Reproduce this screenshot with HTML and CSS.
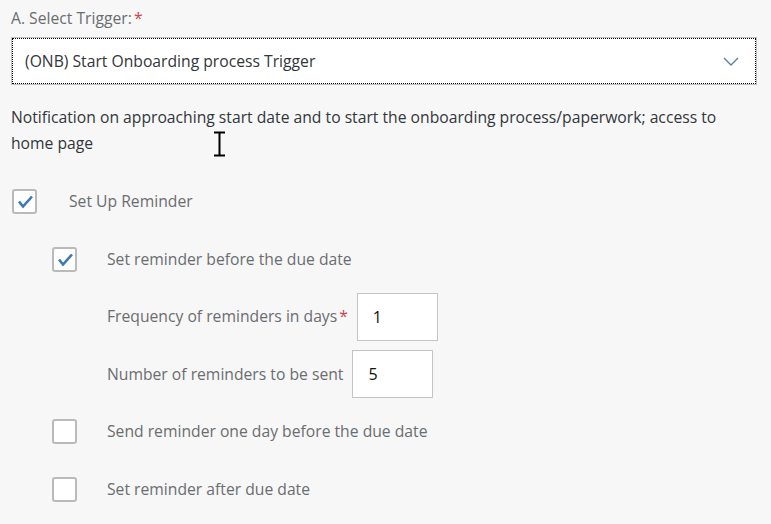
FILE: index.html
```html
<!DOCTYPE html>
<html lang="en">
<head>
  <meta charset="UTF-8" />
  <title>Onboarding Trigger</title>
  <link rel="stylesheet" href="styles.css">
</head>
<body>
  <div class="panel">
    <div class="field-label">A. Select Trigger:<span class="req">*</span></div>

    <div class="select-box">
      <span class="select-text">(ONB) Start Onboarding process Trigger</span>
      <svg class="chevron" width="16" height="9" viewBox="0 0 16 9">
        <path d="M1 1 L8 8 L15 1" fill="none" stroke="#5b80a8" stroke-width="1.4" />
      </svg>
    </div>

    <p class="description">Notification on approaching start date and to start the onboarding process/paperwork; access to home page</p>

    <div class="row">
      <span class="checkbox">
        <svg class="tick" width="21" height="21" viewBox="0 0 21 21">
          <path d="M5 10.5 L9 15.5 L18 5.5" fill="none" stroke="#3b78b5" stroke-width="2.6" />
        </svg>
      </span>
      <span class="row-label">Set Up Reminder</span>
    </div>

    <div class="row nested">
      <span class="checkbox">
        <svg class="tick" width="21" height="21" viewBox="0 0 21 21">
          <path d="M5 10.5 L9 15.5 L18 5.5" fill="none" stroke="#3b78b5" stroke-width="2.6" />
        </svg>
      </span>
      <span class="row-label">Set reminder before the due date</span>
    </div>

    <div class="row sub">
      <span class="row-label">Frequency of reminders in days<span class="req">*</span></span>
      <input class="num-input" type="text" value="1" />
    </div>

    <div class="row sub">
      <span class="row-label">Number of reminders to be sent</span>
      <input class="num-input" type="text" value="5" />
    </div>

    <div class="row nested">
      <span class="checkbox"></span>
      <span class="row-label">Send reminder one day before the due date</span>
    </div>

    <div class="row nested">
      <span class="checkbox"></span>
      <span class="row-label">Set reminder after due date</span>
    </div>
  </div>

  <!-- text cursor caught in the screenshot -->
  <svg class="ibeam" width="13" height="26" viewBox="0 0 13 26">
    <path d="M1 1.5 H12 M6.5 1.5 V24.5 M1 24.5 H12" fill="none" stroke="#000" stroke-width="2" />
  </svg>
</body>
</html>
```

FILE: styles.css
```css
body {
  margin: 0;
  padding: 0;
  background: #f7f7f7;
  font-family: 'Open Sans', 'Noto Sans', sans-serif;
  font-size: 15.7px;
  color: #32363a;
}

.panel {
  padding: 6px 14px 0 11px;
}

.field-label {
  color: #6a6d70;
  line-height: 24px;
  margin-bottom: 7px;
}

.req {
  color: #d0424a;
  margin-left: 2px;
}

.select-box {
  display: flex;
  align-items: center;
  justify-content: space-between;
  height: 48px;
  box-sizing: border-box;
  padding: 0 17px 0 13px;
  background: white;
  border: 1px solid #bfbfbf;
  outline: 1px dotted #000;
  outline-offset: -2px;
}

.select-text {
  color: #32363a;
}

.description {
  margin: 19px 0 17px;
  line-height: 26px;
  color: #32363a;
}

.row {
  display: flex;
  align-items: center;
  height: 57.5px;
}

.row.nested {
  padding-left: 40px;
}

.row.sub {
  padding-left: 96px;
}

.row-label {
  color: #6a6d70;
  margin-top: -1px;
}

.checkbox {
  width: 25px;
  height: 25px;
  box-sizing: border-box;
  border: 2px solid #bababa;
  border-radius: 3px;
  background: white;
  margin-left: 1px;
  margin-right: 32px;
  flex-shrink: 0;
}

.row.nested .checkbox {
  margin-right: 30px;
}

.tick {
  display: block;
}

.num-input {
  width: 81px;
  height: 48px;
  box-sizing: border-box;
  margin-left: 9px;
  padding: 0 15px;
  border: 1px solid #c4c4c4;
  background: white;
  font-family: inherit;
  font-size: 16px;
  color: #111;
}

.ibeam {
  position: absolute;
  left: 213px;
  top: 131px;
}
```
